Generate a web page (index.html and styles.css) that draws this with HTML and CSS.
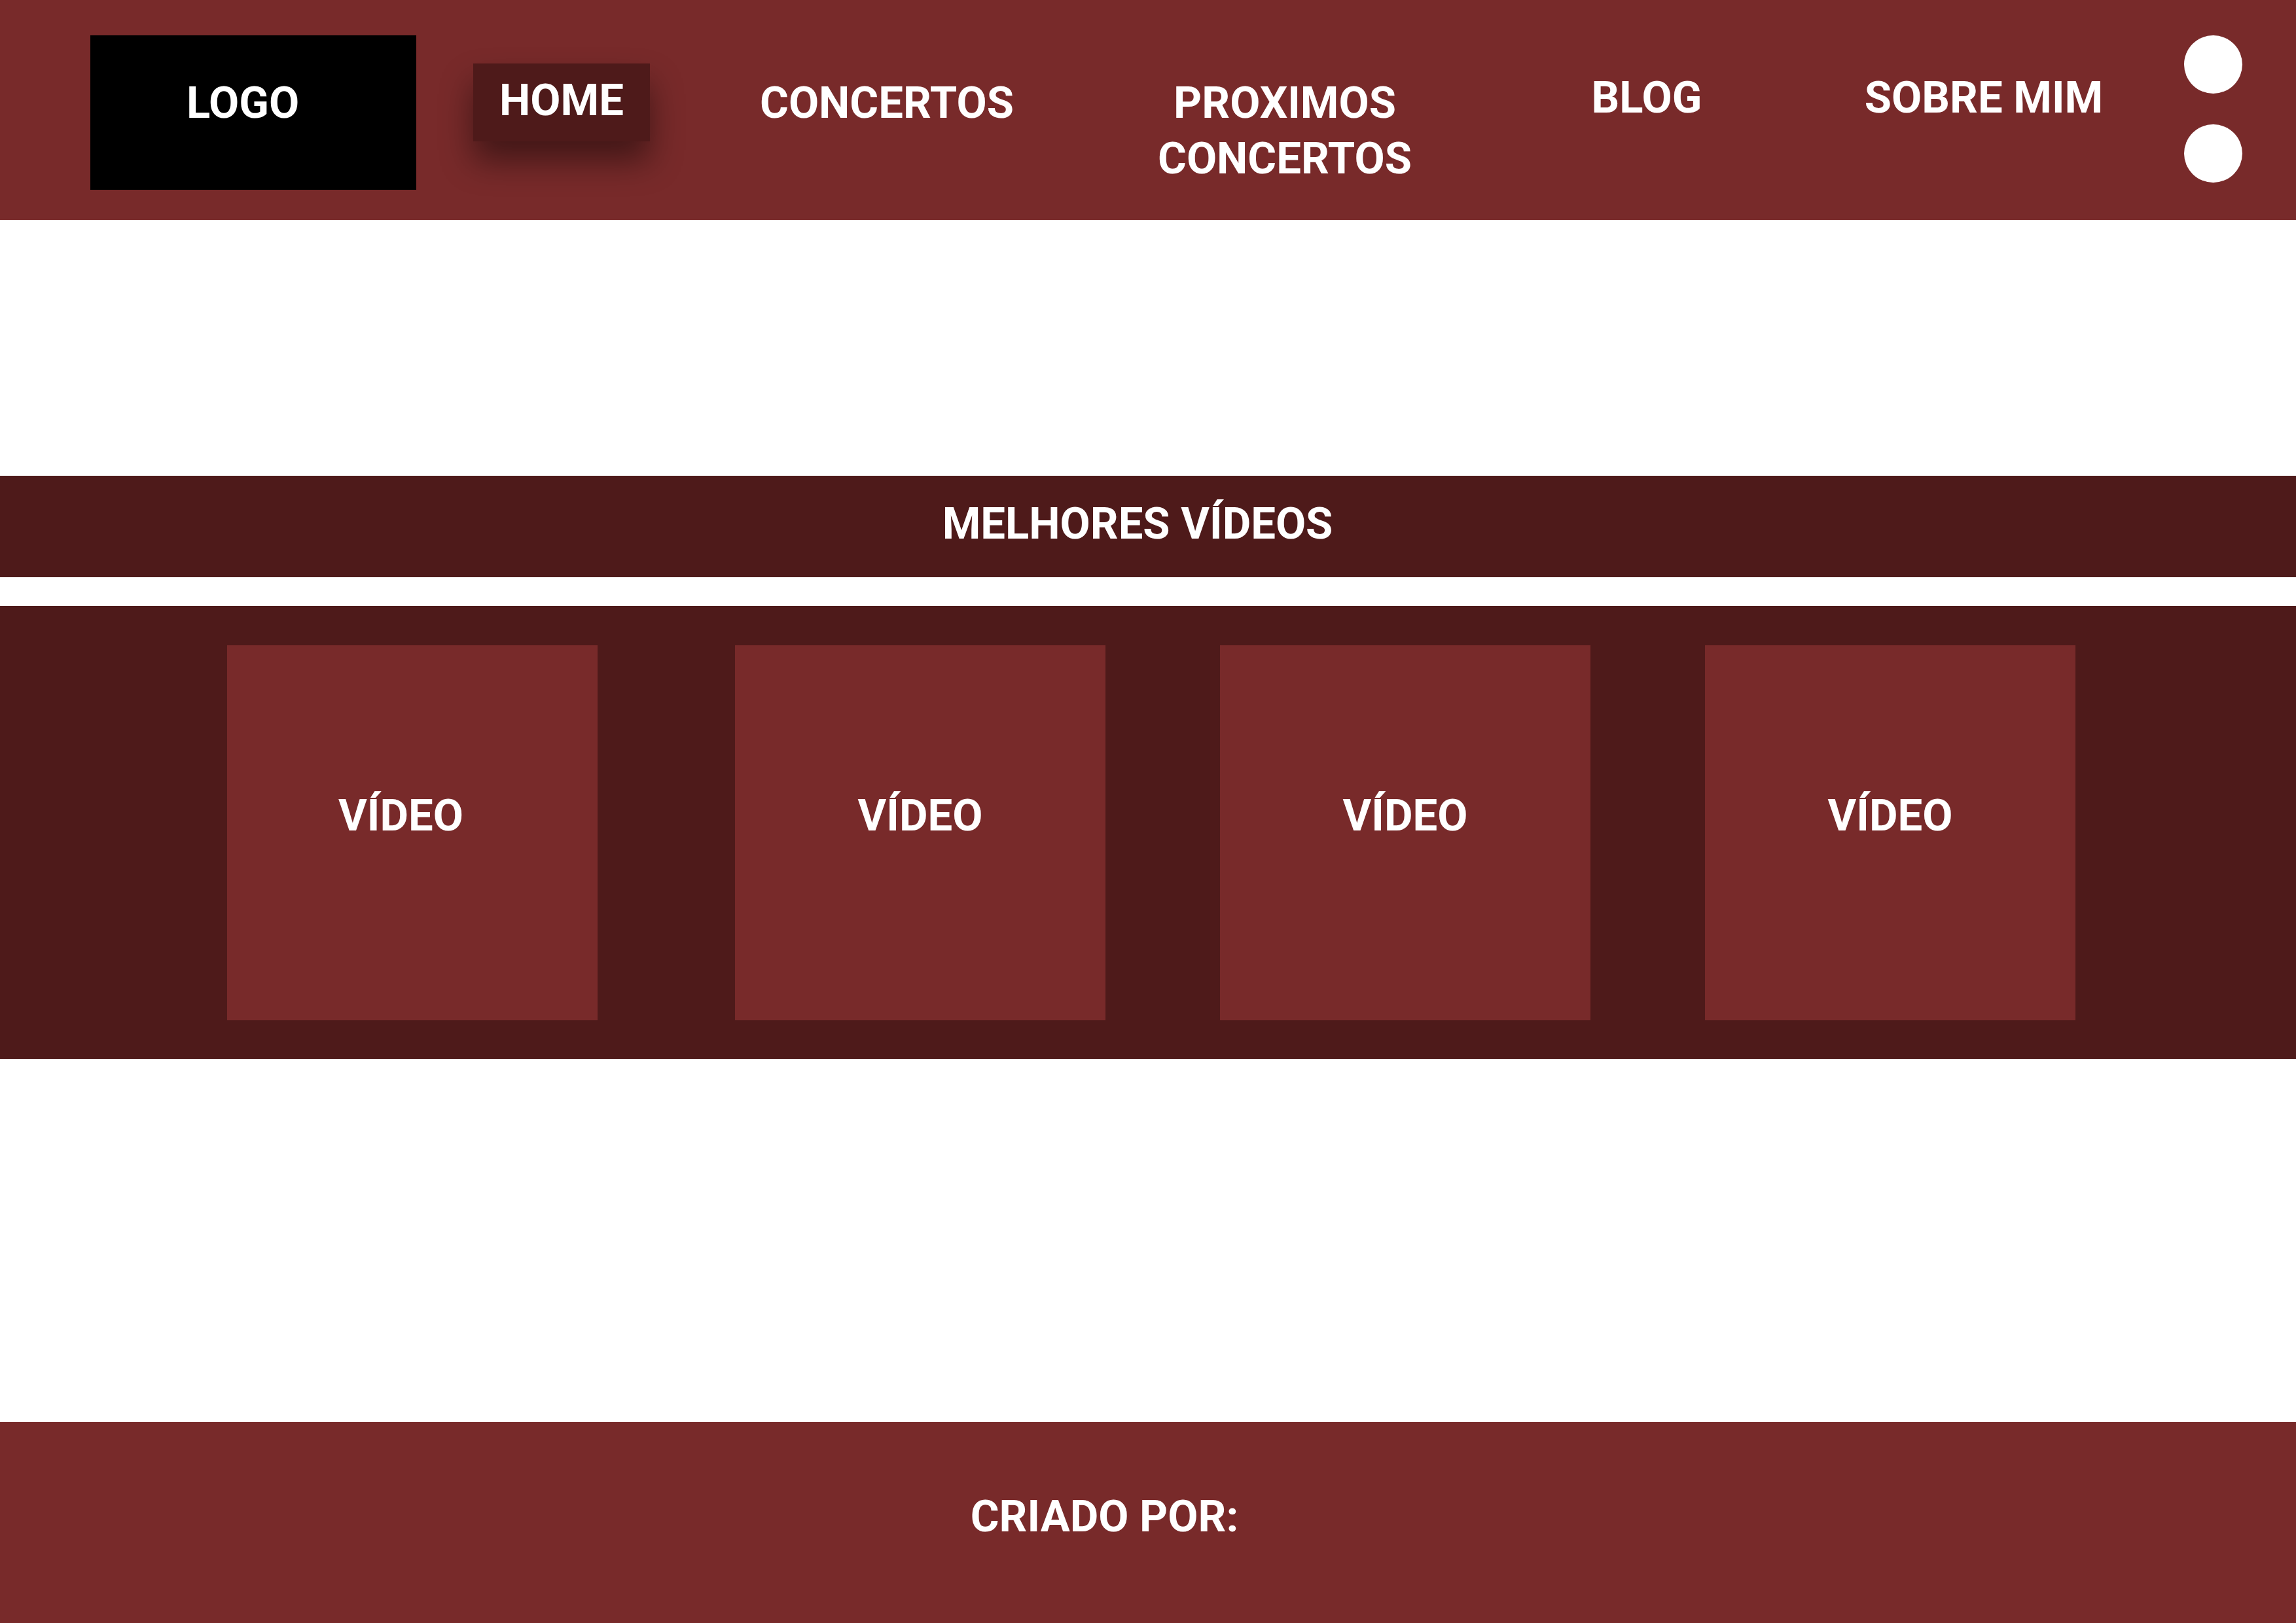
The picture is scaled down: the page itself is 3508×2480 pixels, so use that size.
FILE: index.html
```html
<!DOCTYPE html>
<html lang="pt">
<head>
  <meta charset="utf-8">
  <meta name="viewport" content="width=device-width, initial-scale=1">
  <title>Home</title>
  <link rel="stylesheet" href="styles.css">
</head>
<body>
  <header class="site-header">
    <a class="logo" href="#">LOGO</a>
    <nav class="nav">
      <a class="nav-link nav-link-active" href="#" aria-current="page">HOME</a>
      <a class="nav-link" href="#">CONCERTOS</a>
      <a class="nav-link" href="#">PROXIMOS CONCERTOS</a>
      <a class="nav-link nav-link-raised" href="#">BLOG</a>
      <a class="nav-link nav-link-raised" href="#">SOBRE MIM</a>
    </nav>
    <div class="social">
      <a class="dot" href="#" aria-label="Rede social 1"></a>
      <a class="dot" href="#" aria-label="Rede social 2"></a>
    </div>
  </header>
  <main class="content">
    <h1 class="section-title">MELHORES VÍDEOS</h1>
    <section class="videos">
      <a class="video video-first" href="#">VÍDEO</a>
      <a class="video" href="#">VÍDEO</a>
      <a class="video" href="#">VÍDEO</a>
      <a class="video" href="#">VÍDEO</a>
    </section>
  </main>
  <footer class="site-footer">CRIADO POR:</footer>
</body>
</html>
```
FILE: styles.css
```css
:root {
  --red: #782a2a;
  --dark: #4e1a1a;
}

* {
  box-sizing: border-box;
}

body {
  display: flex;
  flex-direction: column;
  min-height: 100vh;
  margin: 0;
  background: #fff;
  color: #fff;
  font: 700 67px/85px Roboto, "Liberation Sans", sans-serif;
  text-align: center;
}

a {
  color: inherit;
  text-decoration: none;
}

.site-header {
  display: grid;
  grid-template-columns: 498fr 444fr 550fr 666fr 440fr 590fr 100fr;
  align-items: start;
  padding: 54px 82px 46px 138px;
  background: var(--red);
}

.logo {
  min-height: 236px;
  padding: 61px 32px 0 0;
  background: #000;
}

.nav {
  display: contents;
}

.nav-link {
  padding-top: 61px;
}

.nav-link-raised {
  padding-top: 53px;
}

.nav-link-active {
  justify-self: center;
  min-width: 270px;
  margin-top: 43px;
  padding: 14px 0 20px;
  background: var(--dark);
  box-shadow: 0 30px 50px rgba(0, 0, 0, 0.45);
}

.social {
  display: grid;
  justify-items: end;
  gap: 47px;
}

.dot {
  width: 89px;
  height: 89px;
  border-radius: 50%;
  background: #fff;
}

.content {
  display: grid;
  gap: 44px;
  margin-top: 391px;
}

.section-title {
  margin: 0;
  padding: 31px 32px 39px 0;
  background: var(--dark);
  font: inherit;
}

.videos {
  display: grid;
  grid-template-columns: 601fr 566fr 566fr 566fr;
  gap: 175px;
  padding: 60px 337px 59px 347px;
  background: var(--dark);
}

.video {
  aspect-ratio: 566 / 573;
  padding-top: 218px;
  background: var(--red);
}

.video-first {
  margin-right: 35px;
  padding-right: 35px;
}

.site-footer {
  margin-top: auto;
  padding: 102px 133px 120px 0;
  background: var(--red);
}
```
